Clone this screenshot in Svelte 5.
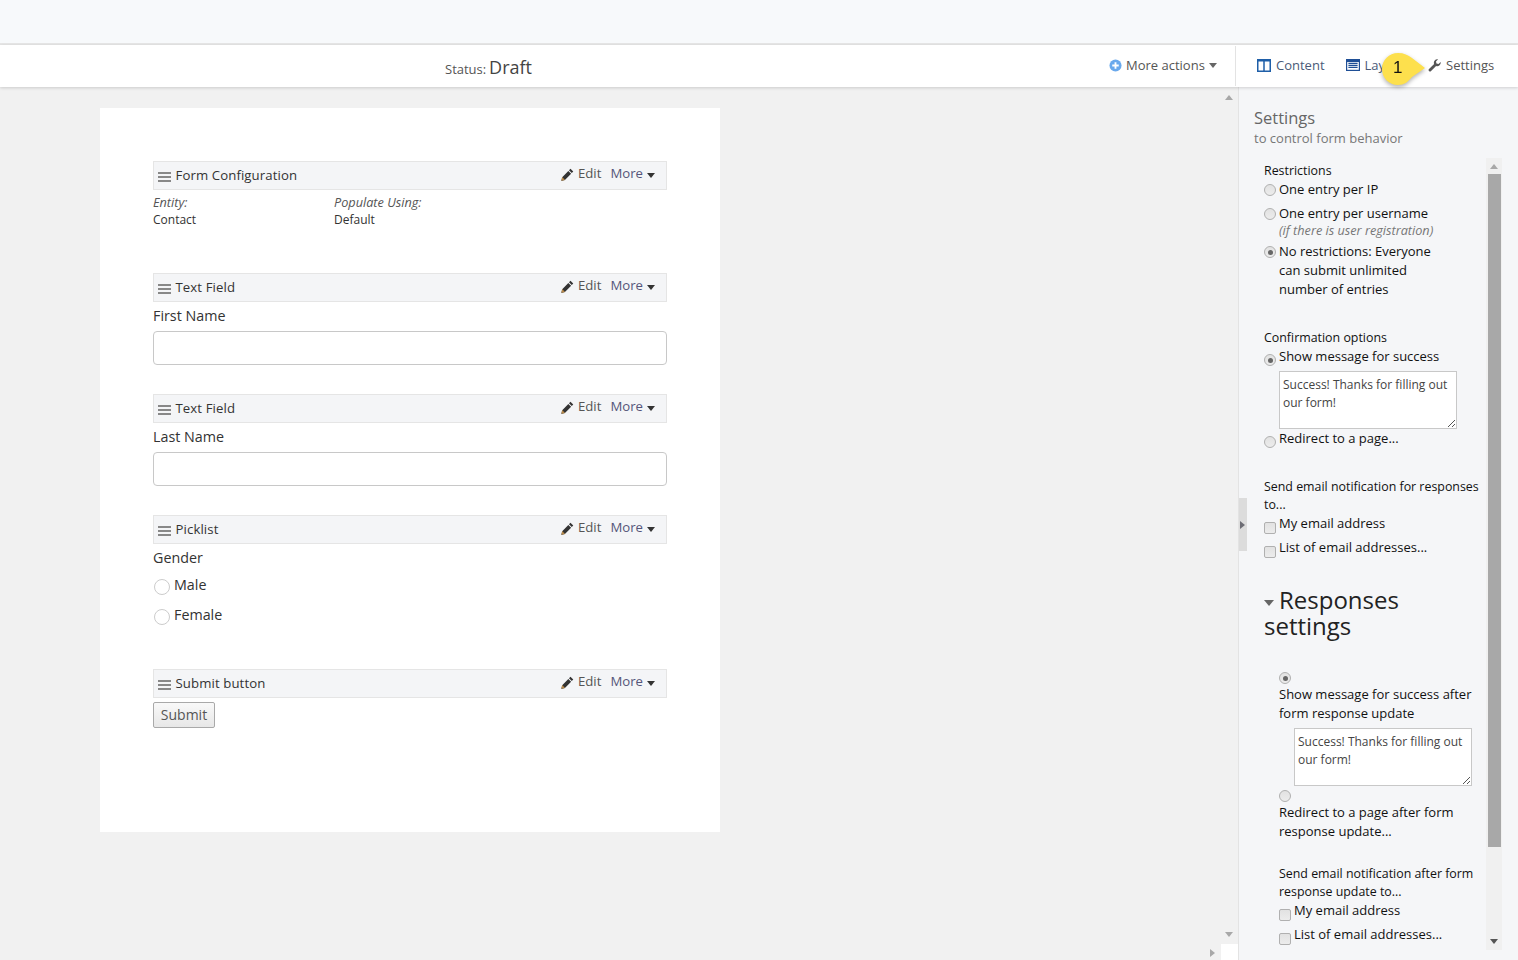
<script>
  const fields = [
    { title: 'Text Field', label: 'First Name', cls: 'first' },
    { title: 'Text Field', label: 'Last Name', cls: 'last' }
  ];
</script>

{#snippet bar(title)}
  <div class="bar">
    <span class="grip"><i></i><i></i><i></i></span>
    <span class="bar-title">{title}</span>
    <span class="bar-actions">
      <svg class="pencil" viewBox="0 0 14 14" width="13" height="13"><path d="M10.2 .8l3 3-1.6 1.6-3-3zM7.9 3.1l3 3-6.7 6.7-3 .9-.9.3 1-4z" fill="#333"/><path d="M1.2 9.6l3.2 3.2-3.9 1z" fill="#b98a4a"/></svg>
      <span class="edit">Edit</span>
      <span class="more">More</span>
      <span class="caret"></span>
    </span>
  </div>
{/snippet}

<div class="page">
  <div class="topband"></div>
  <header class="header">
    <div class="status"><span class="status-k">Status:</span> <span class="status-v">Draft</span></div>
    <div class="actions">
      <svg viewBox="0 0 14 14" width="13" height="13"><circle cx="7" cy="7" r="6.5" fill="#6aa9ec"/><path d="M7 3.5v7M3.5 7h7" stroke="#fff" stroke-width="2"/></svg>
      <span class="act-text">More actions</span>
      <span class="caret grey"></span>
    </div>
    <nav class="tabs">
      <span class="tab t-content">
        <svg viewBox="0 0 14 13" width="14" height="13"><path d="M.75.75h12.5v11.5H.75zM7 .75v11.5" fill="none" stroke="#1f5fa8" stroke-width="1.5"/><path d="M0 0h14v2.5H0z" fill="#1f5fa8"/></svg>
        <span>Content</span>
      </span>
      <span class="tab t-layout">
        <svg viewBox="0 0 14 12" width="14" height="12"><path d="M0 0h14v12H0z" fill="#1f4f96"/><path d="M1.2 3h11.6v7.8H1.2z" fill="#fff"/><path d="M2.4 4.4h9.2M2.4 6.4h9.2M2.4 8.4h9.2" stroke="#1f4f96" stroke-width="1.2"/></svg>
        <span>Layout</span>
      </span>
      <span class="tab t-settings">
        <svg viewBox="0 0 14 14" width="13" height="13"><path d="M13.6 3.2a3.7 3.7 0 0 1-4.9 4.3L3.3 13a1.5 1.5 0 0 1-2.2-2.2l5.5-5.4A3.7 3.7 0 0 1 10.9.4L8.6 2.7l.5 2.2 2.2.5z" fill="#555"/></svg>
        <span>Settings</span>
      </span>
    </nav>
  </header>

  <div class="body">
    <main class="canvas">
      <div class="scroll-v">
        <span class="arrow up"></span>
        <span class="arrow down"></span>
      </div>
      <div class="scroll-h"><span class="arrow right"></span></div>
      <div class="corner"></div>
      <section class="card">
        <div class="sec s-config">
          {@render bar('Form Configuration')}
          <div class="config">
            <div class="cfg-col"><em>Entity:</em><span>Contact</span></div>
            <div class="cfg-col"><em>Populate Using:</em><span>Default</span></div>
          </div>
        </div>
        {#each fields as f}
          <div class="sec {f.cls}">
            {@render bar(f.title)}
            <div class="flabel">{f.label}</div>
            <div class="finput"></div>
          </div>
        {/each}
        <div class="sec s-pick">
          {@render bar('Picklist')}
          <div class="flabel">Gender</div>
          <div class="opt o1"><span class="round"></span><span>Male</span></div>
          <div class="opt o2"><span class="round"></span><span>Female</span></div>
        </div>
        <div class="sec s-submit">
          {@render bar('Submit button')}
          <button class="submit" type="button">Submit</button>
        </div>
      </section>
    </main>

    <aside class="panel">
      <div class="handle"><span class="arrow right dark"></span></div>
      <div class="panel-head">
        <h2>Settings</h2>
        <p>to control form behavior</p>
      </div>
      <div class="pscroll">
        <div class="track">
          <span class="arrow up small"></span>
          <div class="thumb"></div>
          <span class="arrow down small dark"></span>
        </div>
        <div class="pcontent">
          <div class="ghead">Restrictions</div>
          <div class="row r1"><span class="rad"></span><span>One entry per IP</span></div>
          <div class="row r2"><span class="rad"></span><span>One entry per username</span></div>
          <div class="hint">(if there is user registration)</div>
          <div class="row r3"><span class="rad on"></span><span class="r3-text">No restrictions: Everyone can submit unlimited number of entries</span></div>

          <div class="ghead g2">Confirmation options</div>
          <div class="row r4"><span class="rad on low"></span><span>Show message for success</span></div>
          <div class="ta">Success! Thanks for filling out our form!<svg class="grab" viewBox="0 0 8 8" width="8" height="8"><path d="M1 8l7-7M5 8l3-3" stroke="#555" stroke-width="1"/></svg></div>
          <div class="row r5"><span class="rad low"></span><span>Redirect to a page...</span></div>

          <div class="ghead g3">Send email notification for responses to...</div>
          <div class="row r6"><span class="chk"></span><span>My email address</span></div>
          <div class="row r7"><span class="chk"></span><span>List of email addresses...</span></div>

          <h3 class="resp"><span class="rcaret"></span>Responses settings</h3>

          <div class="indent">
            <span class="rad on block b1"></span>
            <div class="para">Show message for success after form response update</div>
            <div class="ta ta2">Success! Thanks for filling out our form!<svg class="grab" viewBox="0 0 8 8" width="8" height="8"><path d="M1 8l7-7M5 8l3-3" stroke="#555" stroke-width="1"/></svg></div>
            <span class="rad block b2"></span>
            <div class="para">Redirect to a page after form response update...</div>
            <div class="ghead g4">Send email notification after form response update to...</div>
            <div class="row r6"><span class="chk"></span><span>My email address</span></div>
            <div class="row r7"><span class="chk"></span><span>List of email addresses...</span></div>
          </div>
        </div>
      </div>
    </aside>
  </div>

  <div class="callout">
    <svg viewBox="0 0 50 44" width="50" height="44"><path d="M21 3C27 3 31 5 35 8L48 18 35 27C31 32 27 35 21 35 12 35 5 28 5 19 5 10 12 3 21 3Z" fill="#fde04d"/></svg>
    <span>1</span>
  </div>
</div>

<style>
  :global(body) { margin: 0; }
  .page {
    position: relative;
    width: 1518px;
    height: 960px;
    overflow: hidden;
    background: #f1f1f1;
    font-family: "Open Sans", sans-serif;
    font-size: 13px;
    color: #000;
  }
  .topband { height: 43px; background: #f7f9fb; border-bottom: 2px solid #e6e6e6; }
  .header {
    position: relative;
    z-index: 2;
    display: flex;
    align-items: stretch;
    height: 42px;
    background: #fff;
    box-shadow: 0 1px 3px rgba(0,0,0,.16);
  }
  .status { position: absolute; left: 445px; top: 9px; color: #555; line-height: 26px; }
  .status-k { font-size: 13px; }
  .status-v { font-size: 18px; color: #444; margin-left: -0.5px; }
  .actions {
    margin-left: auto;
    display: flex;
    align-items: center;
    gap: 4px;
    height: 42px;
    padding: 0 0 2px 1px;
    box-sizing: border-box;
    width: 127px;
    color: #555;
  }
  .act-text { margin-right: 0; }
  .caret {
    display: inline-block;
    width: 0; height: 0;
    border-left: 4.5px solid transparent;
    border-right: 4.5px solid transparent;
    border-top: 5px solid #333;
  }
  .caret.grey { border-top-color: #666; }
  .tabs {
    width: 283px;
    box-sizing: border-box;
    border-left: 1px solid #e3e3e3;
    margin-top: 1px;
    height: 40px;
    display: flex;
    align-items: center;
    padding-left: 21px;
    padding-bottom: 2px;
    position: relative;
  }
  .tab { display: inline-flex; align-items: center; gap: 5px; color: #555; }
  .t-content { color: #4a5a78; }
  .t-layout { margin-left: 21px; color: #4a5a78; }
  .t-settings { margin-left: 8px; position: absolute; left: 184px; top: 10px; }
  .body { display: flex; height: 873px; }
  .canvas { position: relative; width: 1238px; flex: none; padding: 21px 0 0 100px; box-sizing: border-box; }
  .scroll-v .up { position: absolute; left: 1225px; top: 8px; }
  .scroll-v .down { position: absolute; left: 1225px; top: 845px; }
  .scroll-h { position: absolute; left: 0; bottom: 0; height: 16px; width: 1221px; }
  .scroll-h .right { position: absolute; left: 1210px; top: 5px; }
  .corner { position: absolute; right: 0; bottom: 0; width: 17px; height: 16px; background: #fff; }
  .arrow { display: block; width: 0; height: 0; }
  .arrow.up { border-left: 4px solid transparent; border-right: 4px solid transparent; border-bottom: 5px solid #a8a8a8; }
  .arrow.down { border-left: 4px solid transparent; border-right: 4px solid transparent; border-top: 5px solid #a8a8a8; }
  .arrow.right { border-top: 4px solid transparent; border-bottom: 4px solid transparent; border-left: 5px solid #a8a8a8; }
  .arrow.right.dark { border-left-color: #6d6d75; }
  .arrow.down.dark { border-top-color: #555; }
  .card { width: 620px; height: 724px; box-sizing: border-box; padding: 53px 53px 0; background: #fff; }
  .sec { width: 514px; }
  .first { margin-top: 83px; }
  .last { margin-top: 29px; }
  .s-pick { margin-top: 29px; }
  .s-submit { margin-top: 45px; }
  .s-config { height: 29px; }
  .bar {
    display: flex;
    align-items: center;
    box-sizing: border-box;
    height: 29px;
    background: #f4f5f7;
    border: 1px solid #e5e5e5;
    padding: 0 0 2px 4px;
    color: #333;
  }
  .grip { display: flex; flex-direction: column; gap: 2px; width: 13px; margin: 5px 4.5px 0 0; }
  .grip i { display: block; height: 2px; background: #888; }
  .bar-title { font-size: 13.2px; letter-spacing: .1px; color: #333; }
  .bar-actions {
    margin-left: auto;
    display: flex;
    align-items: center;
    padding: 0 11px 3px 0;
    font-size: 13.2px;
    color: #555;
  }
  .pencil { margin: 3px 4px 0 0; }
  .edit { margin-right: 9px; }
  .more { margin-right: 4px; color: #55557a; }
  .bar-actions .caret { margin-top: 5px; }
  .config { display: flex; padding-top: 4px; font-size: 12px; line-height: 18px; color: #333; }
  .cfg-col { display: flex; flex-direction: column; width: 181px; }
  .cfg-col em { color: #555; font-size: 12.7px; line-height: 17px; }
  .flabel { font-size: 14.3px; line-height: 20px; color: #333; margin-top: 4px; }
  .finput {
    margin-top: 5px;
    height: 34px;
    box-sizing: border-box;
    border: 1px solid #c8c8c8;
    border-radius: 4px;
    background: #fff;
  }
  .opt { display: flex; align-items: center; gap: 4px; font-size: 14.3px; color: #333; padding-left: 1px; height: 20px; }
  .o1 { margin-top: 6px; }
  .o2 { margin-top: 10px; }
  .round {
    width: 14px; height: 14px;
    border: 1px solid #ccc;
    border-radius: 50%;
    background: #fff;
    margin-top: 6px;
  }
  .submit {
    display: block;
    margin-top: 4px;
    width: 62px;
    height: 26px;
    padding: 0 0 2px;
    border: 1px solid #a9a9a9;
    border-radius: 2px;
    background: linear-gradient(#f9f9f9, #e7e7e7);
    font-family: inherit;
    font-size: 14px;
    color: #555;
  }
  .panel {
    position: relative;
    flex: 1;
    background: #f5f6f8;
    border-left: 1px solid #e3e3e3;
  }
  .handle {
    position: absolute;
    left: 0; top: 411px;
    width: 8px; height: 53px;
    background: #dcdcdc;
    display: flex;
    align-items: center;
    padding-left: 1px;
    box-sizing: border-box;
  }
  .panel-head { padding: 21px 0 0 15px; height: 71px; box-sizing: border-box; }
  .panel-head h2 { margin: 0; font-size: 16.5px; line-height: 20px; font-weight: 400; color: #666; }
  .panel-head p { margin: 0; line-height: 20px; color: #777; }
  .pscroll { position: relative; height: 792px; overflow: hidden; }
  .track {
    position: absolute;
    left: 247px; top: 0;
    width: 16px; height: 792px;
    background: #f0f0f0;
  }
  .track .up.small { position: absolute; left: 4px; top: 6px; }
  .track .down.small { position: absolute; left: 4px; top: 781px; }
  .thumb { position: absolute; left: 2px; top: 16px; width: 13px; height: 673px; background: #a8a8a8; }
  .pcontent {
    width: 216px;
    padding: 4px 0 0 25px;
    font-size: 13px;
    line-height: 19px;
    color: #111;
  }
  .ghead { font-size: 12.4px; line-height: 18px; }
  .g2 { margin-top: 30px; }
  .g3 { margin-top: 30px; }
  .g4 { margin-top: 24px; }
  .row { display: flex; align-items: flex-start; gap: 3px; }
  .r2 { margin-top: 5px; }
  .r3 { margin-top: 4px; }
  .r3-text { width: 165px; }
  .r5 { margin-top: 0; }
  .r7 { margin-top: 4px; }
  .hint { margin: -1px 0 0 15px; font-size: 12.7px; line-height: 16px; font-style: italic; color: #777; }
  .rad, .chk {
    flex: none;
    box-sizing: border-box;
    width: 12px; height: 12px;
    margin-top: 4px;
    border: 1px solid #b0b0b0;
    background: linear-gradient(#e2e2e2, #ececec);
  }
  .rad { border-radius: 50%; position: relative; }
  .rad.on::after {
    content: "";
    position: absolute;
    left: 2.5px; top: 2.5px;
    width: 5px; height: 5px;
    border-radius: 50%;
    background: #666;
  }
  .rad.low { margin-top: 7px; }
  .chk { border-radius: 2px; margin-top: 8px; }
  .ta {
    position: relative;
    box-sizing: border-box;
    width: 178px; height: 58px;
    margin: 5px 0 0 15px;
    padding: 4px 3px;
    border: 1px solid #c8c8c8;
    background: #fff;
    font-size: 12px;
    line-height: 18px;
    color: #444;
  }
  .grab { position: absolute; right: 1px; bottom: 1px; }
  .resp {
    margin: 29px 0 0;
    width: 190px;
    font-size: 24px;
    line-height: 26px;
    font-weight: 400;
    color: #222;
  }
  .rcaret {
    display: inline-block;
    width: 0; height: 0;
    margin: 0 5px 3px 0;
    border-left: 5.5px solid transparent;
    border-right: 5.5px solid transparent;
    border-top: 6px solid #666;
  }
  .indent { margin-left: 15px; padding-top: 1px; }
  .rad.block { display: block; }
  .b1 { margin-top: 32px; }
  .b2 { margin-top: 4px; }
  .para { line-height: 19px; margin-top: 1px; }
  .ta2 { margin-left: 15px; }
  .callout { position: absolute; left: 1377px; top: 50px; width: 50px; height: 44px; z-index: 5; filter: drop-shadow(0 2px 2px rgba(0,0,0,.3)); }
  .callout svg { display: block; }
  .callout span {
    position: absolute;
    left: 16px; top: 8px;
    font-family: "Liberation Sans", sans-serif;
    font-size: 17px;
    line-height: 20px;
    color: #111;
  }
</style>
